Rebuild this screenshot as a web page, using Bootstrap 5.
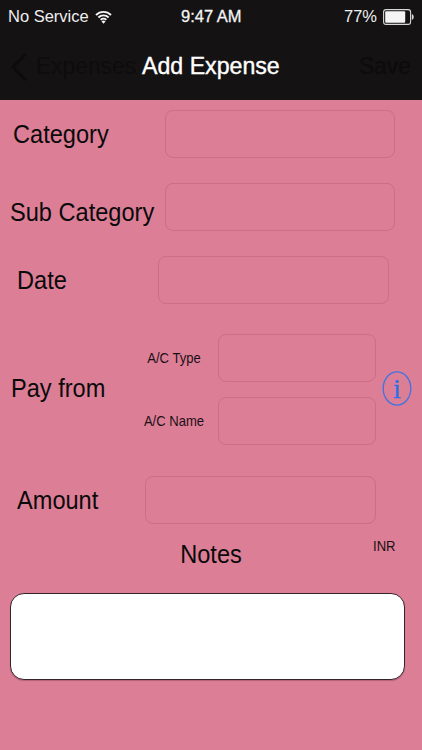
<!DOCTYPE html>
<html lang="en">
<head>
<meta charset="utf-8">
<title>Add Expense</title>
<link href="https://cdn.jsdelivr.net/npm/bootstrap@5.3.0/dist/css/bootstrap.min.css" rel="stylesheet">
<style>
html,body{height:750px;overflow:hidden}
body{background:#dd7e97;font-family:"Liberation Sans",Arial,sans-serif;color:#111;width:422px}
.top-area{background:#141213;height:100px;flex:none}
.status-line{height:33px;padding:0 8px;color:#efefef;font-size:16.5px;position:relative}
.status-left{gap:6px}
.status-right{gap:6px}
.status-time{position:absolute;left:181px;font-size:16.5px;color:#f4f4f4;-webkit-text-stroke:.3px #f4f4f4}
.nav-line{height:67px;padding:0 11px 0 10px;position:relative;color:#0d0b0c;font-size:24.5px}
.nav-title{position:absolute;left:142px;top:17px;color:#fff;font-size:24.5px;line-height:32px;-webkit-text-stroke:.4px #fff;transform:scaleX(.945);transform-origin:left center}
.nav-back{color:#0e0c0d;margin-left:8px;transform:scaleX(.93);transform-origin:left center}
.nav-save{-webkit-text-stroke:.2px #0d0b0c;transform:scaleX(.93);transform-origin:right center}
.field{height:48px;border:1px solid #cd6e87;border-radius:8px;background:#dd7e97;display:block;flex:none}
.w-wide{width:231px}.w-narrow{width:158px}
.lab{font-size:25.5px;line-height:30px;white-space:nowrap;color:#0a0a0a;transform:scaleX(.925);transform-origin:left center}
.sub-lab{font-size:14.5px;line-height:18px;white-space:nowrap;color:#1a1014;width:70px;text-align:center;flex:none;margin-left:-1px;transform:scaleX(.9)}
.r1{height:48px;margin-top:10px;padding-left:13px}
.r2{height:48px;margin-top:25px;padding-left:10px}
.r2 .lab{margin-top:10px;width:145px;flex:none}
.r3{height:48px;margin-top:25px;padding-left:17px}
.r1 .w-wide,.r2 .w-wide{width:230px;margin-left:auto;margin-right:27px}
.r3 .field{margin-left:auto;margin-right:33px}
.pay{margin-top:30px;height:111px;padding-left:11px}
.pay .lab{width:129px;flex:none;margin-bottom:4px}
.pay-col{width:236px;gap:15px;flex:none}
.pay-row{height:48px}
.pay-row .field{margin-left:auto}
.info-wrap{margin-left:6px;margin-bottom:2px}
.info-wrap svg{display:block}
.r5{height:48px;margin-top:31px;padding-left:17px}
.r5 .field{margin-left:auto;margin-right:46px}
.notes-line{height:40px;margin-top:10px;position:relative}
.notes-title{font-size:26.5px;line-height:40px;text-align:center;color:#0a0a0a;transform:scaleX(.89)}
.inr{position:absolute;left:373px;top:3px;font-size:14.5px;line-height:18px;color:#1a1014;transform:scaleX(.9);transform-origin:left center}
.note-box{height:87px;margin:19px 17px 0 10px;background:#fff;border:1px solid #35232a;border-radius:14px;box-shadow:0 1px 1px rgba(60,20,30,.25)}
</style>
</head>
<body class="m-0">
<header class="top-area d-flex flex-column">
  <div class="status-line d-flex align-items-center justify-content-between">
    <div class="status-left d-flex align-items-center">
      <span>No Service</span>
      <svg width="17" height="14" viewBox="0 0 17 14" aria-hidden="true"><path d="M1 5a10.6 10.6 0 0 1 15 0M3.4 7.5a7.2 7.2 0 0 1 10.2 0M5.7 9.8a3.9 3.9 0 0 1 5.6 0" fill="none" stroke="#f4f4f4" stroke-width="1.9"/><path d="M8.5 13.8l-2-2.3a2.8 2.8 0 0 1 4 0z" fill="#f4f4f4"/></svg>
    </div>
    <span class="status-time">9:47 AM</span>
    <div class="status-right d-flex align-items-center">
      <span>77%</span>
      <svg width="31" height="16" viewBox="0 0 31 16" aria-hidden="true"><rect x=".6" y=".6" width="27" height="14.8" rx="2.5" fill="none" stroke="#d8d8d8" stroke-width="1.1"/><rect x="2.2" y="2.2" width="20" height="11.6" rx="1" fill="#f4f4f4"/><path d="M28.8 5.2c1.5.3 1.9 1.4 1.9 2.8s-.4 2.5-1.9 2.8z" fill="#d8d8d8"/></svg>
    </div>
  </div>
  <div class="nav-line d-flex align-items-center justify-content-between">
    <div class="d-flex align-items-center">
      <svg width="18" height="30" viewBox="0 0 18 30" aria-hidden="true"><path d="M15.5 2L3 15l12.5 13" fill="none" stroke="#0d0b0c" stroke-width="3"/></svg>
      <span class="nav-back">Expenses</span>
    </div>
    <span class="nav-title">Add Expense</span>
    <span class="nav-save">Save</span>
  </div>
</header>
<main>
  <div class="r1 d-flex align-items-center"><label class="lab">Category</label><span class="field w-wide"></span></div>
  <div class="r2 d-flex align-items-center"><label class="lab">Sub Category</label><span class="field w-wide"></span></div>
  <div class="r3 d-flex align-items-center"><label class="lab">Date</label><span class="field w-wide"></span></div>
  <div class="pay d-flex align-items-center">
    <label class="lab">Pay from</label>
    <div class="pay-col d-flex flex-column">
      <div class="pay-row d-flex align-items-center"><span class="sub-lab">A/C Type</span><span class="field w-narrow"></span></div>
      <div class="pay-row d-flex align-items-center"><span class="sub-lab">A/C Name</span><span class="field w-narrow"></span></div>
    </div>
    <div class="info-wrap">
      <svg width="30" height="35" viewBox="0 0 30 35" aria-hidden="true"><ellipse cx="15" cy="17.5" rx="13.8" ry="16.6" fill="none" stroke="#3f74e0" stroke-width="1.3"/><text x="15" y="27" text-anchor="middle" font-family="Liberation Serif,serif" font-size="27" fill="#2f6fe6" stroke="#2f6fe6" stroke-width=".4">i</text></svg>
    </div>
  </div>
  <div class="r5 d-flex align-items-center"><label class="lab">Amount</label><span class="field w-wide"></span></div>
  <div class="notes-line">
    <div class="notes-title">Notes</div>
    <span class="inr">INR</span>
  </div>
  <div class="note-box"></div>
</main>
<script src="https://cdn.jsdelivr.net/npm/bootstrap@5.3.0/dist/js/bootstrap.bundle.min.js"></script>
</body>
</html>
